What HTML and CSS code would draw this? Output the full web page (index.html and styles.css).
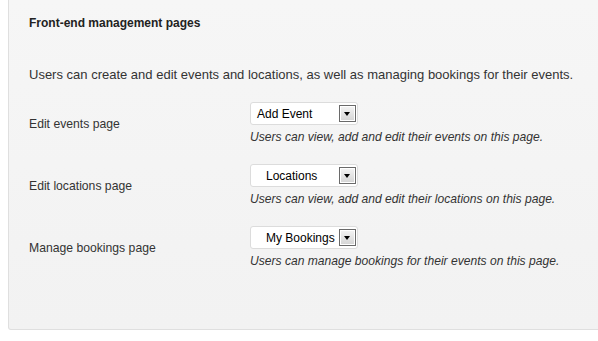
FILE: index.html
```html
<!DOCTYPE html>
<html lang="en">
<head>
  <meta charset="UTF-8">
  <title>Front-end management pages</title>
  <link rel="stylesheet" href="styles.css">
</head>
<body>
  <div class="postbox">
    <h3 class="box-title">Front-end management pages</h3>
    <p class="intro">Users can create and edit events and locations, as well as managing bookings for their events.</p>

    <div class="form-rows">
      <div class="form-row">
        <div class="row-label">Edit events page</div>
        <div class="row-field">
          <div class="fake-select">
            <span class="select-text select-text-left">Add Event</span>
            <span class="select-arrow"></span>
          </div>
          <em class="row-desc">Users can view, add and edit their events on this page.</em>
        </div>
      </div>

      <div class="form-row">
        <div class="row-label">Edit locations page</div>
        <div class="row-field">
          <div class="fake-select">
            <span class="select-text">Locations</span>
            <span class="select-arrow"></span>
          </div>
          <em class="row-desc">Users can view, add and edit their locations on this page.</em>
        </div>
      </div>

      <div class="form-row">
        <div class="row-label">Manage bookings page</div>
        <div class="row-field">
          <div class="fake-select">
            <span class="select-text">My Bookings</span>
            <span class="select-arrow"></span>
          </div>
          <em class="row-desc">Users can manage bookings for their events on this page.</em>
        </div>
      </div>
    </div>
  </div>
</body>
</html>
```

FILE: styles.css
```css
/* Reset */
* { margin: 0; padding: 0; box-sizing: border-box; }

html, body {
  background: #fff;
  font-family: "Liberation Sans", Arial, sans-serif;
  color: #333;
  overflow: hidden;
}

/* パネル */
.postbox {
  margin-left: 8px;
  margin-right: -20px;
  height: 330px;
  background: linear-gradient(to bottom, #f6f6f6, #f2f2f2);
  border: 1px solid #dfdfdf;
  border-top: none;
  border-radius: 0 0 0 3px;
  padding-left: 20px;
}

.box-title {
  font-size: 12px;
  font-weight: bold;
  line-height: 16px;
  color: #222;
  padding-top: 15px;
}

.intro {
  font-size: 13px;
  line-height: 18px;
  margin-top: 35px;
}

/* 設定行 */
.form-rows {
  margin-top: 18px;
  display: flex;
  flex-direction: column;
  gap: 19px;
}

.form-row {
  display: flex;
  align-items: center;
}

.row-label {
  width: 221px;
  font-size: 12.2px;
  line-height: 18px;
}

.row-field {
  display: flex;
  flex-direction: column;
  align-items: flex-start;
}

/* セレクト風ボックス */
.fake-select {
  width: 108px;
  height: 23px;
  background: #fff;
  border: 1px solid #dcdcdc;
  border-radius: 3px;
  display: flex;
  align-items: center;
  justify-content: space-between;
  padding: 0 1px 0 15px;
  font-size: 12px;
  color: #000;
}

.select-text-left {
  margin-left: -9px;
}

.select-arrow {
  width: 17px;
  height: 17px;
  border: 1px solid #6a6a6a;
  background: linear-gradient(to bottom, #f4f4f4, #d4d4d4);
  box-shadow: inset 0 0 0 1px #fff;
  position: relative;
}

.select-arrow::after {
  content: "";
  position: absolute;
  left: 4px;
  top: 6px;
  border-left: 3.5px solid transparent;
  border-right: 3.5px solid transparent;
  border-top: 4px solid #000;
}

.row-desc {
  font-size: 12.1px;
  line-height: 16px;
  margin-top: 4px;
  color: #333;
}
```
